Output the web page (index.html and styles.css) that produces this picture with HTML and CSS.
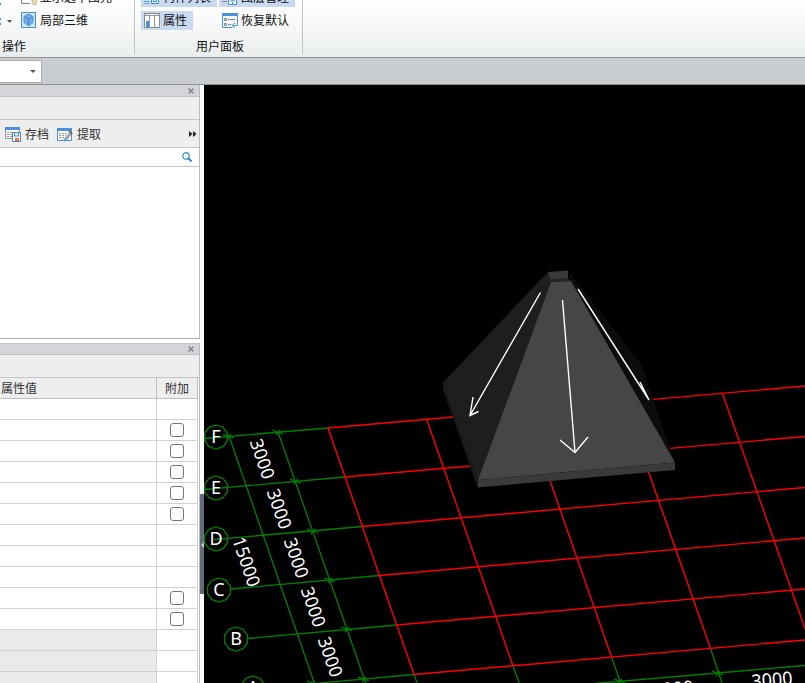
FILE: index.html
```html
<!DOCTYPE html>
<html lang="zh-CN">
<head>
<meta charset="utf-8">
<title>属性</title>
<link rel="stylesheet" href="styles.css">
</head>
<body>
<div class="app">
  <header class="ribbon">
    <section class="group group-ops">
      <div class="ribbon-row">
        <button class="menu-stub" type="button" aria-label="更多"><svg width="14" height="16" viewBox="0 0 14 16"><path d="M0 13h1v2H0z" fill="#3f8ed8"/></svg></button>
        <button class="tool" type="button"><svg width="16" height="16" viewBox="0 0 16 16"><path d="M.5 1v13.500H9" fill="none" stroke="#7e858c"/><path d="M11 9h5v3l-1 1v3h-3v-3l-1-1z" fill="#f5dc9a" stroke="#b9b3a0"/></svg>显示选中图元</button>
      </div>
      <div class="ribbon-row">
        <button class="menu-stub" type="button" aria-label="视图"><svg width="14" height="16" viewBox="0 0 14 16"><path d="M0 5h1v2H0zM0 10h1v2H0z" fill="#3f8ed8"/><path d="M7 7h5L9.500 10z" fill="#555"/></svg></button>
        <button class="tool" type="button"><svg width="16" height="16" viewBox="0 0 16 16"><path d="M.5.5h14v15H.5z" fill="#d4e5f7" stroke="#4a8fce"/><path d="M7.500 2l4.500 2.500v6L7.500 14 3 10.500v-6z" fill="#74aeea" stroke="#4f90d6"/><path d="M4 5l3.500 2L11 5M7.500 7v6" fill="none" stroke="#3b81c8"/></svg>局部三维</button>
      </div>
      <div class="group-name">操作</div>
    </section>
    <section class="group group-panel">
      <div class="ribbon-row">
        <button class="tool on" type="button"><svg width="16" height="16" viewBox="0 0 16 16"><path d="M0 12.500h5M1 14.500h4" stroke="#3f8ed8" stroke-dasharray="2 1"/><path d="M7.500 8.500h7v6h-7zM9.500 10.500h3v2h-3z" fill="#e6f0fb" stroke="#3f8ed8"/></svg>构件列表</button>
        <button class="tool on" type="button"><svg width="16" height="16" viewBox="0 0 16 16"><path d="M0 12.500h5" stroke="#7e858c"/><path d="M6.500 8h8v7.500h-8z" fill="#fff" stroke="#3f8ed8"/><path d="M8 12h5M10.500 10v5" stroke="#3f8ed8" stroke-dasharray="2 1"/></svg>图层管理</button>
      </div>
      <div class="ribbon-row">
        <button class="tool on" type="button"><svg width="16" height="16" viewBox="0 0 16 16"><path d="M.5 1.500h15v14H.5z" fill="#fff" stroke="#7e878f"/><path d="M0 3.500h16M5.500 4v11M10.500 4v11" stroke="#8d969d"/><path d="M2 9h3v6H2z" fill="#3f8ed8"/></svg>属性</button>
        <span class="spacer"></span>
        <button class="tool" type="button"><svg width="16" height="16" viewBox="0 0 16 16"><path d="M.5 1.500h15v14H.5z" fill="#f4f9fd" stroke="#4a8fdc"/><path d="M0 1h16v3H0z" fill="#4a8fdc"/><path d="M2.500 6.500h2v2h-2zM2.500 11.500h2v2h-2z" fill="none" stroke="#7e878f"/><path d="M6 7.500h7M6 12.500h3" stroke="#7e878f"/><path d="M10 10h6v6h-6z" fill="#f4f9fd"/><path d="M11 13.500h4.500V9M13 11l-3 2.500 3 2.500" fill="none" stroke="#4a8fdc"/></svg>恢复默认</button>
      </div>
      <div class="group-name centered">用户面板</div>
    </section>
  </header>
  <div class="context-bar">
    <div class="combo"><select aria-label="楼层"><option></option></select><svg width="6" height="4" viewBox="0 0 6 4"><path d="M0 0h6L3 3z" fill="#555"/></svg></div>
  </div>
  <main class="workspace">
    <aside class="dock">
      <section class="panel list-panel">
        <div class="title-bar"><button class="close" type="button" aria-label="关闭列表"><svg width="6" height="6" viewBox="0 0 6 6"><path d="M.5.5l5 5M5.500.5l-5 5"/></svg></button></div>
        <div class="caption"></div>
        <div class="toolbar">
          <button class="tool" type="button"><svg width="16" height="16" viewBox="0 0 16 16"><path d="M.5 1.500h14v11H.5z" fill="#fff" stroke="#8d969d"/><path d="M0 1h15v3H0z" fill="#4a90dc"/><path d="M2 6.500h10M2 8.500h10M2 10.500h6" stroke="#8d969d" stroke-dasharray="2 1"/><path d="M7.500 6.500h8v9h-8z" fill="#fff" stroke="#3e86d0"/><path d="M9.500 7v3h4V7" fill="none" stroke="#3e86d0"/><path d="M10 12h4v3h-4z" fill="#f07828"/></svg>存档</button>
          <button class="tool" type="button"><svg width="16" height="16" viewBox="0 0 16 16"><path d="M.5 2.500h14v12H.5z" fill="#fff" stroke="#4a90dc"/><path d="M0 2h15v3H0z" fill="#4a90dc"/><path d="M2 7.500h8M2 9.500h7M2 11.500h6" stroke="#8d969d" stroke-dasharray="2 1"/><path d="M8 14l5-6" stroke="#9aa2a8" stroke-width="3"/><path d="M12 5l3 3" stroke="#666" stroke-width="2"/><path d="M7 15l2-2" stroke="#38b3d8" stroke-width="2"/></svg>提取</button>
          <button class="more" type="button" aria-label="更多工具"><svg width="8" height="6" viewBox="0 0 8 6"><path d="M0 0l3.500 3L0 6zM4 0l3.500 3L4 6z" fill="#222"/></svg></button>
        </div>
        <div class="search"><input type="text" aria-label="搜索"><svg width="10" height="10" viewBox="0 0 10 10"><circle cx="4" cy="4" r="3.200" fill="none" stroke="#4a9cd0" stroke-width="1.400"/><path d="M6 6l3.500 3.500" stroke="#3a86bd" stroke-width="2"/></svg></div>
        <div class="list"></div>
      </section>
      <section class="panel props-panel">
        <div class="title-bar"><button class="close" type="button" aria-label="关闭属性"><svg width="6" height="6" viewBox="0 0 6 6"><path d="M.5.5l5 5M5.500.5l-5 5"/></svg></button></div>
        <div class="caption"></div>
        <table class="props">
          <thead><tr><th>属性值</th><th class="extra">附加</th></tr></thead>
          <tbody>
            <tr><td></td><td></td></tr>
            <tr><td></td><td><input type="checkbox" aria-label="附加 2"></td></tr>
            <tr><td></td><td><input type="checkbox" aria-label="附加 3"></td></tr>
            <tr><td></td><td><input type="checkbox" aria-label="附加 4"></td></tr>
            <tr><td></td><td><input type="checkbox" aria-label="附加 5"></td></tr>
            <tr><td></td><td><input type="checkbox" aria-label="附加 6"></td></tr>
            <tr><td></td><td></td></tr>
            <tr><td></td><td></td></tr>
            <tr><td></td><td></td></tr>
            <tr><td></td><td><input type="checkbox" aria-label="附加 10"></td></tr>
            <tr><td></td><td><input type="checkbox" aria-label="附加 11"></td></tr>
            <tr class="section"><td></td><td></td></tr>
            <tr class="section"><td></td><td></td></tr>
            <tr class="section"><td></td><td></td></tr>
          </tbody>
        </table>
      </section>
    </aside>
    <div class="splitter"><button type="button" aria-label="折叠面板"><svg width="4" height="6" viewBox="0 0 4 6"><path d="M4 0v6L1 3z" fill="#c5cace"/></svg></button></div>
    <div class="viewport">
      <svg class="scene" viewBox="204 85 601 598" preserveAspectRatio="xMinYMin slice">
        <defs>
          <path id="bubble" d="M0-12L7-9.700 11.400-3.700V3.700L7 9.700 0 12-7 9.700-11.400 3.700V-3.700L-7-9.700z"/>
          <path id="tick" d="M-6-2L5 2M-2 3L2-2"/>
        </defs>
        <g class="axis">
          <path d="M204 438.500L328 428M204 489.500L345 477M214 539.500L362.500 526.500M231 589L379.500 575.500M248 638.500L397 625M265 688L414 674.500"/>
          <path d="M229 436L316 688M278 432L366 684"/>
          <path d="M414 674.500l5 14M513 666l8 22M611.500 657l8.500 24M710.500 648.500l12 36M595 683.500L805 665.500"/>
          <use href="#tick" x="229" y="436"/><use href="#tick" x="278" y="432"/><use href="#tick" x="296" y="481"/><use href="#tick" x="313" y="531"/><use href="#tick" x="330" y="580"/><use href="#tick" x="347" y="629"/><use href="#tick" x="364" y="679"/><use href="#tick" x="313" y="683"/><use href="#tick" x="620" y="681"/><use href="#tick" x="718" y="673"/>
          <use href="#bubble" x="216" y="437"/><use href="#bubble" x="216" y="488"/><use href="#bubble" x="216" y="539"/><use href="#bubble" x="219" y="590"/><use href="#bubble" x="236" y="639"/><use href="#bubble" x="253" y="688"/>
        </g>
        <g class="grid-lines">
          <path d="M328 428L805 386M345 477L805 436.500M362.500 526.500L805 487.500M379.500 575.500L805 538M397 625L805 589M414 674.500L805 640"/>
          <path d="M328 428L414 674.500M426.500 419L513 666M525.500 410.500L611.500 657M624 402L710.500 648.500M722.500 393.500L809 640"/>
        </g>
        <g class="labels">
          <text x="216" y="443">F</text><text x="216" y="494">E</text><text x="216" y="545">D</text><text x="219" y="596">C</text><text x="236" y="645">B</text><text x="253" y="694">A</text>
          <text transform="translate(262 459) rotate(71)" y="6">3000</text>
          <text transform="translate(279 509) rotate(71)" y="6">3000</text>
          <text transform="translate(296 558) rotate(71)" y="6">3000</text>
          <text transform="translate(313 607) rotate(71)" y="6">3000</text>
          <text transform="translate(330 657) rotate(71)" y="6">3000</text>
          <text transform="translate(246 562) rotate(71)" y="6">15000</text>
          <text transform="translate(772 680) rotate(-5)" y="6">3000</text>
          <text transform="translate(673 689) rotate(-5)" y="6">3000</text>
        </g>
        <g class="solid">
          <path d="M548 272L443 382.500V389L478 488V480L551 282z" fill="#1e1e1e"/>
          <path d="M443 382.500L478 480V488L443 389z" fill="#191919"/>
          <path d="M568 270.500L641 364 669 445 675 463 571 281z" fill="#0c0c0c"/>
          <path d="M548 272L568 270.500V279L550 280z" fill="#3a3a3a"/>
          <path d="M550 279.500L568 278 571 281 551 282z" fill="#242424"/>
          <path d="M551 282L571 281 675 462.500 478 480z" fill="#464646"/>
          <path d="M478 480L675 462.500V470L478 487.500z" fill="#3a3a3a"/>
        </g>
        <path class="slope" d="M540.500 292.500L470 415.500M473 397L470 415.500 478.500 411.500M562.500 300L575 452.500M560 440L575 452.500 588 437M578 289L649 400M640 382L649 400 642 387"/>
      </svg>
    </div>
  </main>
</div>
</body>
</html>
```
FILE: styles.css
```css
* { box-sizing: border-box; }
body {
  margin: 0;
  font: 12px/16px "Noto Sans CJK SC", "Liberation Sans", sans-serif;
  color: #111;
  background: #fff;
}
button {
  display: flex;
  align-items: center;
  padding: 0;
  border: 0;
  background: none;
  color: inherit;
  font: inherit;
  white-space: nowrap;
}
svg { display: block; flex: none; }
.app { display: flex; flex-direction: column; height: 100vh; overflow: hidden; }

.ribbon {
  display: flex;
  flex: none;
  align-items: flex-end;
  height: 58px;
  overflow: hidden;
  background: linear-gradient(#fff, #f6f8f8 50%, #e9eded);
  border-bottom: 1px solid #8d9695;
}
.group {
  display: flex;
  flex-direction: column;
  gap: 4px;
  padding-bottom: 2px;
  margin-bottom: 3px;
  border-right: 1px solid #bfc3c4;
}
.group-ops { width: 135px; }
.group-panel { width: 168px; padding-left: 6px; }
.ribbon-row { display: flex; gap: 2px; }
.group-name { padding: 4px 0 0 2px; margin-bottom: -2px; }
.group-name.centered { padding-left: 0; padding-right: 3px; text-align: center; }
.tool { gap: 3px; height: 19px; padding: 0 3px; }
.ribbon .tool { padding: 0 6px 1px 3px; }
.tool.on { background: #c9daf0; }
.menu-stub { width: 16px; }
.spacer { width: 22px; }

.context-bar {
  flex: none;
  height: 27px;
  padding-top: 2px;
  background: #c9ccd0;
  border-bottom: 1px solid #8e9194;
}
.combo {
  display: flex;
  align-items: center;
  width: 42px;
  height: 23px;
  padding-right: 5px;
  background: #fff;
  border: 1px solid #aaadb0;
  border-left: 0;
}
.combo select { flex: 1; min-width: 0; border: 0; background: none; appearance: none; }

.workspace { display: flex; flex: 1; min-height: 0; }
.dock { display: flex; flex-direction: column; gap: 4px; width: 200px; overflow: hidden; }
.panel { flex: none; border-right: 1px solid #b8babd; }
.title-bar {
  display: flex;
  align-items: center;
  justify-content: flex-end;
  height: 12px;
  padding-right: 5px;
  background: #d4d5da;
  border-bottom: 1px solid #c0c1c5;
}
.props-panel .title-bar { border-top: 1px solid #c0c1c5; }
.close svg { stroke: #858585; stroke-width: 1.5; }
.caption { height: 23px; background: #eee; border-bottom: 1px solid #c4c5c8; }
.toolbar {
  display: flex;
  align-items: center;
  gap: 2px;
  height: 28px;
  padding-left: 2px;
  background: #eee;
  border-bottom: 1px solid #c4c5c8;
  color: #333;
}
.toolbar .tool { gap: 4px; }
.more { margin: 0 2px 0 auto; }
.search {
  display: flex;
  align-items: center;
  height: 19px;
  padding-right: 7px;
  border-bottom: 1px solid #c4c5c8;
}
.search input { flex: 1; min-width: 0; height: 16px; padding: 0; border: 0; background: none; }
.list { height: 172px; border-bottom: 1px solid #a9abae; }

.props { width: 198px; table-layout: fixed; border-collapse: separate; border-spacing: 0; color: #333; }
.props th, .props td {
  height: 21px;
  padding: 0;
  border-right: 1px solid #d2d2d2;
  border-bottom: 1px solid #d2d2d2;
}
.props th { padding-left: 1px; background: #eee; border-color: #bebfc1; font-weight: 400; text-align: left; }
.props .extra { width: 41px; padding: 0; text-align: center; }
.props .section td:first-child { background: #eaeaea; }
.props input {
  display: block;
  width: 14px;
  height: 14px;
  margin: 0 auto;
  appearance: none;
  background: #fff;
  border: 1px solid #777;
  border-radius: 3px;
}

.splitter { display: flex; flex: none; width: 4px; padding-top: 409px; align-items: flex-start; }
.splitter button { width: 4px; height: 100px; background: #626d78; }
.splitter svg { margin-top: 1px; }

.viewport { flex: 1; min-width: 0; overflow: hidden; background: #000; }
.scene { width: 100%; height: 100%; }
.axis { fill: none; stroke: #008000; stroke-width: 1.3; }
.grid-lines { fill: none; stroke: #f00; stroke-width: 1.4; }
.labels { fill: #fff; font: 18px "Noto Sans", sans-serif; text-anchor: middle; }
.slope { fill: none; stroke: #fff; stroke-width: 1.4; }
```
